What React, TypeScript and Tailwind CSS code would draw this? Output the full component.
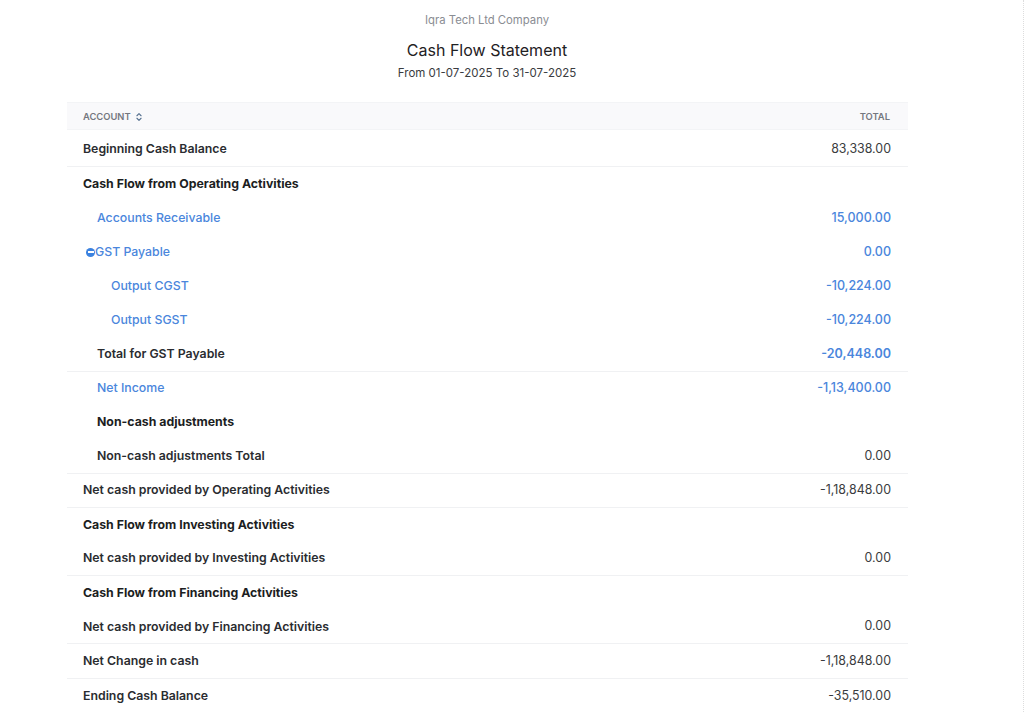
import { ChevronsUpDown } from 'lucide-react';

type Row = {
  label: string;
  total?: string;
  indent?: 0 | 1 | 2;
  link?: boolean;
  strongAmount?: boolean;
  toggle?: boolean;
  heading?: boolean;
  border?: boolean;
  height?: string;
};

const ROWS: Row[] = [
  { label: 'Beginning Cash Balance', total: '83,338.00', border: true, height: 'h-[37px] pt-[3px]' },
  { label: 'Cash Flow from Operating Activities', heading: true },
  { label: 'Accounts Receivable', total: '15,000.00', indent: 1, link: true },
  { label: 'GST Payable', total: '0.00', link: true, toggle: true },
  { label: 'Output CGST', total: '-10,224.00', indent: 2, link: true },
  { label: 'Output SGST', total: '-10,224.00', indent: 2, link: true },
  { label: 'Total for GST Payable', total: '-20,448.00', indent: 1, strongAmount: true, border: true },
  { label: 'Net Income', total: '-1,13,400.00', indent: 1, link: true },
  { label: 'Non-cash adjustments', indent: 1, heading: true },
  { label: 'Non-cash adjustments Total', total: '0.00', indent: 1, border: true },
  { label: 'Net cash provided by Operating Activities', total: '-1,18,848.00', border: true },
  { label: 'Cash Flow from Investing Activities', heading: true },
  { label: 'Net cash provided by Investing Activities', total: '0.00', border: true },
  { label: 'Cash Flow from Financing Activities', heading: true },
  { label: 'Net cash provided by Financing Activities', total: '0.00', border: true },
  { label: 'Net Change in cash', total: '-1,18,848.00', border: true, height: 'h-[35px]' },
  { label: 'Ending Cash Balance', total: '-35,510.00' },
];

const ReportRow = ({ row }: { row: Row }) => {
  const indent = row.indent === 2 ? 'pl-[44px]' : row.indent === 1 ? 'pl-[30px]' : 'pl-[16px]';
  const labelStyle = row.link
    ? 'font-medium text-[#4a86dc]'
    : row.heading
      ? 'font-bold text-[#1c1e22]'
      : 'font-semibold text-[#2a2c30]';
  const amountStyle = row.strongAmount
    ? 'text-[12.5px] font-semibold text-[#4a86dc]'
    : row.link
      ? 'text-[12.5px] font-medium text-[#4a86dc]'
      : 'text-[12.4px] text-[#3a3c40]';

  return (
    <div
      className={`flex items-center justify-between pr-[17px] text-[12.3px] ${indent} ${
        row.height ?? 'h-[34.1px]'
      } ${row.border ? 'border-b border-[#f0f1f3]' : ''}`}
    >
      {row.toggle ? (
        <div className={`flex items-center pl-[3px] ${labelStyle}`}>
          <span className="flex h-[9px] w-[9px] items-center justify-center rounded-full bg-[#3b82e0]">
            <span className="h-[1.5px] w-[6px] bg-white" />
          </span>
          <span>{row.label}</span>
        </div>
      ) : (
        <span className={labelStyle}>{row.label}</span>
      )}
      {row.total && <span className={amountStyle}>{row.total}</span>}
    </div>
  );
};

export default function App() {
  return (
    <div className="flex h-[712px] w-[1024px] flex-col overflow-hidden border-r border-dotted border-[#dddddd] bg-white font-['Inter',sans-serif]">
      <div className="flex w-[974px] flex-col items-center pt-[12px]">
        <p className="text-[11.3px] leading-[16px] text-[#8a8d93]">Iqra Tech Ltd Company</p>
        <h1 className="mt-[12px] text-[16px] leading-[20px] font-normal text-[#1f2124]">Cash Flow Statement</h1>
        <p className="mt-[5px] text-[11.5px] leading-[16px] text-[#3a3c40]">From 01-07-2025 To 31-07-2025</p>
      </div>
      <div className="mt-[21px] ml-[67px] w-[841px]">
        <div className="flex h-[28px] items-center justify-between border-y border-[#f3f4f6] bg-[#f9f9fb] pt-[2px] pr-[18px] pl-[16px] text-[9.4px] font-semibold text-[#74777f]">
          <div className="flex items-center gap-[3px]">
            <span>ACCOUNT</span>
            <ChevronsUpDown size={10} strokeWidth={2.6} className="text-[#55708f]" />
          </div>
          <span>TOTAL</span>
        </div>
        {ROWS.map((row) => (
          <ReportRow key={row.label} row={row} />
        ))}
      </div>
    </div>
  );
}
